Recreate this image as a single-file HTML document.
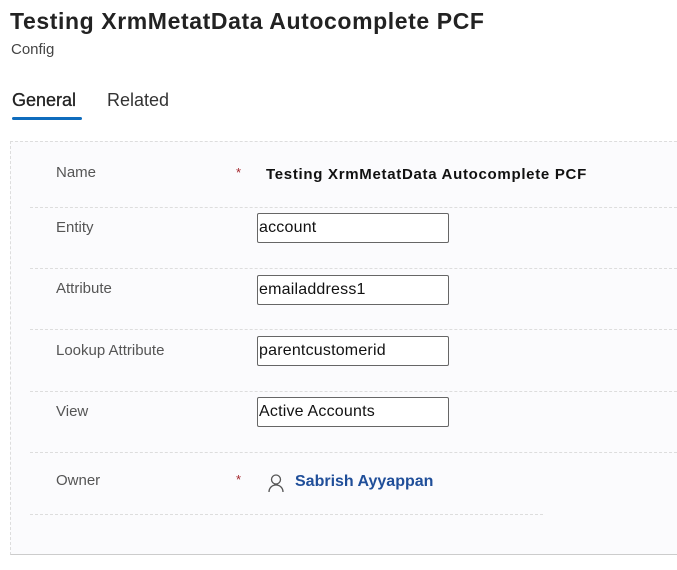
<!DOCTYPE html>
<html><head><style>
body{margin:0;width:677px;height:570px;background:#fff;font-family:"Liberation Sans",sans-serif;position:relative;overflow:hidden;color:#323130}
.a{position:absolute;white-space:nowrap}
.lbl{font-size:15px;color:#555;left:56px}
.inp{position:absolute;left:257px;width:189px;height:28px;border:1px solid #666;border-radius:2px;background:#fff;font-size:16px;color:#111;line-height:28px;padding-left:1px;box-sizing:content-box;letter-spacing:0.2px}
.sep{position:absolute;left:30px;right:0;border-top:1px dashed #ddd}
.star{color:#a4262c;font-size:13px;left:236px}
</style></head><body>
<div class="a" style="left:10px;top:8px;font-size:23px;font-weight:bold;color:#222;letter-spacing:0.6px">Testing XrmMetatData Autocomplete PCF</div>
<div class="a" style="left:11px;top:41px;font-size:15px;color:#444">Config</div>
<div class="a" style="left:12px;top:90px;font-size:18px;color:#222;-webkit-text-stroke:0.3px #222">General</div>
<div class="a" style="left:107px;top:90px;font-size:18px;color:#333">Related</div>
<div class="a" style="left:12px;top:117px;width:70px;height:3px;background:#0f6cbd;border-radius:2px"></div>
<div class="a" style="left:10px;top:141px;width:680px;height:412px;background:#fbfbfd;border:1px dashed #ddd;border-bottom:1px solid #ccc"></div>
<div class="a lbl" style="top:164px">Name</div>
<div class="a star" style="top:165px">*</div>
<div class="a" style="left:266px;top:166px;font-size:15px;font-weight:bold;color:#111;letter-spacing:0.7px">Testing XrmMetatData Autocomplete PCF</div>
<div class="sep" style="top:207px"></div>
<div class="a lbl" style="top:219px">Entity</div>
<div class="inp" style="top:213px">account</div>
<div class="sep" style="top:268px"></div>
<div class="a lbl" style="top:280px">Attribute</div>
<div class="inp" style="top:275px">emailaddress1</div>
<div class="sep" style="top:329px"></div>
<div class="a lbl" style="top:342px">Lookup Attribute</div>
<div class="inp" style="top:336px">parentcustomerid</div>
<div class="sep" style="top:391px"></div>
<div class="a lbl" style="top:403px">View</div>
<div class="inp" style="top:397px">Active Accounts</div>
<div class="sep" style="top:452px"></div>
<div class="a lbl" style="top:472px">Owner</div>
<div class="a star" style="top:472px">*</div>
<svg class="a" style="left:266px;top:473px" width="20" height="20" viewBox="0 0 20 20"><circle cx="10" cy="6.5" r="4.5" fill="none" stroke="#555" stroke-width="1.3"/><path d="M3 19c0-4 3-7 7-7s7 3 7 7" fill="none" stroke="#555" stroke-width="1.3"/></svg>
<div class="a" style="left:295px;top:473px;font-size:16px;font-weight:bold;color:#1f4e99">Sabrish Ayyappan</div>
<div class="a" style="left:30px;top:514px;width:513px;border-top:1px dashed #ddd"></div>
</body></html>
